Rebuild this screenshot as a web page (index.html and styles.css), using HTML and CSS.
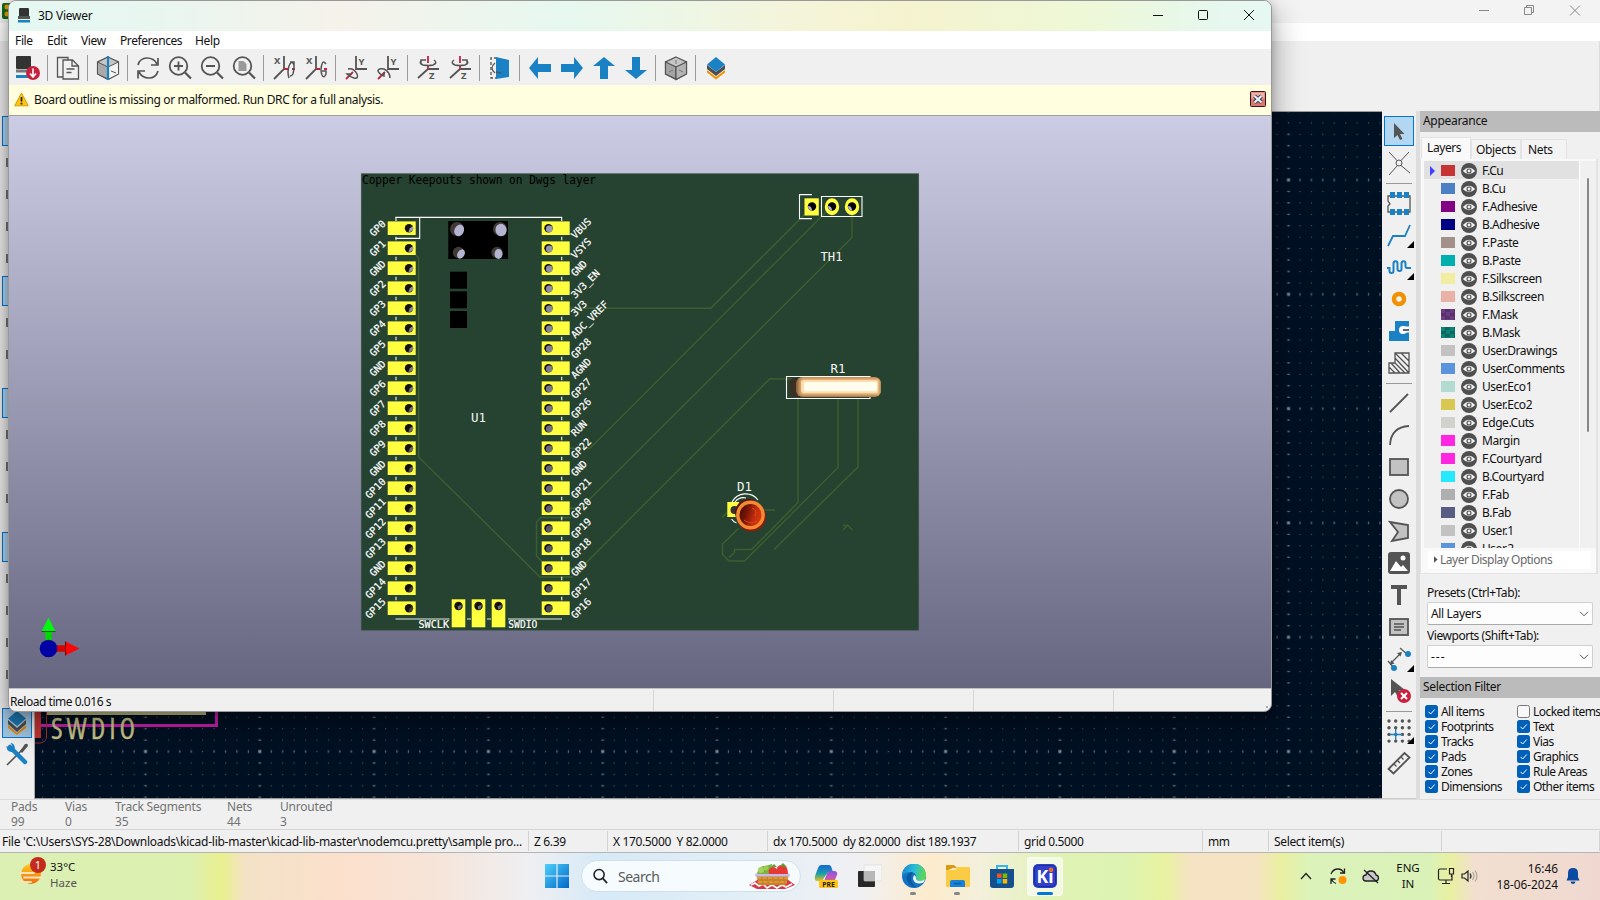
FILE: index.html
```html
<!DOCTYPE html>
<html lang="en">
<head>
<meta charset="utf-8">
<title>3D Viewer</title>
<link rel="stylesheet" href="styles.css">
</head>
<body>
<div class="desktop">
  <div class="editor">
    <div class="ed-title">
      <svg class="app-icon" viewBox="0 0 16 16"><rect width="16" height="16" rx="2" fill="#0d6b1c"/><circle cx="5" cy="4" r="2.5" fill="#f09a00"/><circle cx="5" cy="11" r="2.5" fill="#f09a00"/></svg>
      <svg class="ed-ctl" viewBox="0 0 130 23" fill="none" stroke="#8a8a8a"><path d="M9 10.5h10M54.500 7.500h7v7h-7zM56.500 7V5.500h7v7H62M100 5.500l10 10m0-10l-10 10"/></svg>
    </div>
    <div class="ed-menu"></div>
    <div class="ed-tools"></div>
    <div class="ed-body">
      <div class="ed-left">
        <i class="sel"></i><i></i><i></i><i></i><i></i><i class="sel"></i><i></i><i></i><b></b><i class="sel"></i><i></i><i></i><i></i><b></b><i class="sel"></i><i></i><i></i><i></i><i></i><b></b>
        <span class="tb on"><svg viewBox="0 0 32 32"><path d="M7 19l9 8 9-8v3l-9 7-9-7z" fill="#e08a10"/><path d="M7 14l9 8 9-8v4l-9 8-9-8z" fill="#4d4d4d"/><path d="M16 5l9 7.500-9 7.500-9-7.500z" fill="#1a74ac"/></svg></span>
        <span class="tb"><svg viewBox="0 0 32 32"><path d="M6 27L24 9" stroke="#545454" stroke-width="1.600"/><path d="M19 13l5-7q3-1 3 2l-6 7z" fill="#545454"/><path d="M9 9l15 15" stroke="#1a81c4" stroke-width="4.500" stroke-linecap="round"/><path d="M5.500 8q0 6 6 6 3-3 2-6-1-3-4-3l2 3-2 2z" fill="#1a81c4"/></svg></span>
      </div>
      <svg class="ed-canvas" viewBox="35 111 1347 688">
        <defs><pattern id="minor" x="145" y="751" width="11.430" height="11.430" patternUnits="userSpaceOnUse"><rect width="1.100" height="1.100" fill="#4f5967"/></pattern>
        <pattern id="major" x="88" y="694" width="114.300" height="114.300" patternUnits="userSpaceOnUse"><g id="ticks"></g></pattern></defs>
        <rect x="35" y="111" width="1347" height="688" fill="#001023"/>
        <rect x="35" y="111" width="1347" height="688" fill="url(#minor)"/>
        <rect x="35" y="111" width="1347" height="688" fill="url(#major)"/>
        <path d="M35 111.500h1347M35 798.500h1347" stroke="#9a9a9a"/>
        <rect x="47" y="700" width="159" height="15" fill="#c8c38a"/>
        <path d="M41 725.500h175.500V700" fill="none" stroke="#cc1fb0" stroke-width="3"/>
        <rect x="35" y="700" width="6" height="38" fill="#c83232"/>
        <path d="M46.500 700v37q-1 6-7 6h-5" fill="none" stroke="#a52d32"/>
        <text x="51" y="739" class="silk-big" textLength="84" lengthAdjust="spacing">SWDIO</text>
      </svg>
      <div class="ed-right" id="rightbar"></div>
      <div class="panel">
        <div class="cap">Appearance</div>
        <div class="tabs"><span class="tab act">Layers</span><span class="tab t2">Objects</span><span class="tab t3">Nets</span></div>
        <div class="page">
          <div class="listwrap"><div class="list" id="layers"></div><div class="scroll"><i></i></div></div>
          <div class="ldo"><svg viewBox="0 0 5 8"><path d="M0 0l4.500 4L0 8z" fill="#555"/></svg>Layer Display Options</div>
        </div>
        <div class="lab">Presets (Ctrl+Tab):</div>
        <div class="drop">All Layers<svg viewBox="0 0 10 6"><path d="M1 .8l4 4 4-4" fill="none" stroke="#555"/></svg></div>
        <div class="lab l2">Viewports (Shift+Tab):</div>
        <div class="drop"><span class="dash">---</span><svg viewBox="0 0 10 6"><path d="M1 .8l4 4 4-4" fill="none" stroke="#555"/></svg></div>
        <div class="cap c2">Selection Filter</div>
        <div class="checks" id="checks"></div>
      </div>
    </div>
    <div class="ed-info">
      <span class="w1">Pads<br>99</span><span class="w2">Vias<br>0</span><span class="w3">Track Segments<br>35</span><span class="w4">Nets<br>44</span><span>Unrouted<br>3</span>
    </div>
    <div class="ed-status">
      <span class="s1">File 'C:\Users\SYS-28\Downloads\kicad-lib-master\kicad-lib-master\nodemcu.pretty\sample pro...</span><span class="s2">Z 6.39</span><span class="s3">X 170.5000&nbsp; Y 82.0000</span><span class="s4">dx 170.5000&nbsp; dy 82.0000&nbsp; dist 189.1937</span><span class="s5">grid 0.5000</span><span class="s6">mm</span><span class="s7">Select item(s)</span><span class="s8"></span>
    </div>
  </div>

  <div class="viewer">
    <div class="v-title">
      <svg class="v-icon" viewBox="0 0 12 15"><rect x="1" width="10" height="9" rx="1" fill="#333"/><rect y="8" width="12" height="3" fill="#555"/><rect y="12" width="12" height="2.500" fill="#1a81c4"/></svg>
      <span>3D Viewer</span>
      <svg class="v-ctl" viewBox="0 0 120 30" fill="none" stroke="#111"><path d="M1 14.500h10"/><rect x="46.500" y="9.500" width="9" height="9" rx="1"/><path d="M92 9l10 10m0-10L92 19"/></svg>
    </div>
    <div class="v-menu"><span class="m1">File</span><span class="m2">Edit</span><span class="m3">View</span><span class="m4">Preferences</span><span>Help</span></div>
    <div class="v-tools" id="vtools"></div>
    <div class="v-warn">
      <svg class="wi" viewBox="0 0 15 15"><path d="M7.500 1l6.800 12.800H.7z" fill="#fcc419" stroke="#d79a00" stroke-linejoin="round"/><path d="M7.500 5v4.500M7.500 10.800v1.700" stroke="#222" stroke-width="1.700"/></svg>
      <span>Board outline is missing or malformed. Run DRC for a full analysis.</span>
      <svg class="wx" viewBox="0 0 16 16"><rect x=".5" y=".5" width="15" height="15" rx="1" fill="#d9796c" stroke="#3c1020"/><path d="M1.500 1.500h13v6h-13z" fill="#edb0a4"/><path d="M4.500 5l7 6.500m0-6.500l-7 6.500" stroke="#333a50" stroke-width="4"/><path d="M4.500 5l7 6.500m0-6.500l-7 6.500" stroke="#eef" stroke-width="2.200"/></svg>
    </div>
    <svg class="v-canvas" viewBox="9 116 1262 572">
      <defs>
        <linearGradient id="sky" x1="0" y1="0" x2="0" y2="1"><stop offset="0" stop-color="#cccce5"/><stop offset="1" stop-color="#666680"/></linearGradient>
        <linearGradient id="res" x1="0" y1="0" x2="0" y2="1"><stop offset="0" stop-color="#c08850"/><stop offset=".2" stop-color="#f6c48c"/><stop offset=".8" stop-color="#f6c48c"/><stop offset="1" stop-color="#a87444"/></linearGradient>
        <linearGradient id="resend" x1="0" y1="0" x2="1" y2="0"><stop offset="0" stop-color="#7a5026" stop-opacity=".9"/><stop offset=".09" stop-color="#c08850" stop-opacity="0"/><stop offset=".96" stop-color="#c08850" stop-opacity="0"/><stop offset="1" stop-color="#a87444" stop-opacity=".7"/></linearGradient>
        <linearGradient id="led" x1="0" y1="0" x2="1" y2=".3"><stop offset="0" stop-color="#2c0804"/><stop offset=".45" stop-color="#7c1606"/><stop offset=".75" stop-color="#c02c0c"/><stop offset="1" stop-color="#d8380e"/></linearGradient>
        <linearGradient id="shade" x1="0" y1="0" x2="0" y2="1"><stop offset="0" stop-color="#b4b4cc"/><stop offset="1" stop-color="#8a8aa2"/></linearGradient>
      </defs>
      <rect x="9" y="116" width="1262" height="572" fill="url(#sky)"/>
      <rect x="361.300" y="173.800" width="557.400" height="456.300" fill="#264230" stroke="#3c5146" stroke-width=".7"/>
      <g class="track">
        <path d="M415 254l3.700 4V457L540 577h33M571 517.500h-30l-4.500 4.500v34l6 6"/>
        <path d="M570 308.300h140.700L811 208M570 448.300h20L831 207M570 508.300h10.500L852 237.500V210M570 568.300h10.500L769.500 379H795"/>
        <path d="M798 398V502.500L751.500 549.500H734.500v3L729 557.500M838 398v69.500L744.500 561H729l-6.500-6.500V544l16-15.500M858 398v69l-84 82.500"/>
        <path d="M722 517.500l6-6M764 510h11M843 525.500h5l4.500 4.500M843 530l5-5"/>
      </g>
      <text x="362" y="184" class="cu-note" textLength="234" lengthAdjust="spacingAndGlyphs">Copper Keepouts shown on Dwgs layer</text>
      <g class="silk">
        <path d="M395.500 217.400H562M419.700 217.400v21H395.500"/>
        <path d="M396 217v4M561.700 217v4"/>
        <path d="M395.500 619h54M467 619h4M487 619h4M508 619h54" stroke="#a8b5ac" stroke-width="1.700"/>
        <path d="M812 194.600h-12.500v24H812M821.500 196.500H862v20h-40.500zM786.500 376.500H870v22h-83.500z"/>
      </g>
      <g id="pads"></g>
      <rect x="448.300" y="221" width="59.700" height="38"/>
      <rect x="450" y="271.700" width="17" height="17"/><rect x="450" y="291.300" width="17" height="17"/><rect x="450" y="311" width="17" height="17"/>
      <g fill="#403a36"><circle cx="457" cy="229" r="7"/><circle cx="500" cy="229" r="7"/><circle cx="458.500" cy="252.500" r="5.700"/><circle cx="497" cy="252.500" r="5.700"/></g>
      <g fill="#b4b4d0"><ellipse cx="459.300" cy="230.300" rx="4.700" ry="6" transform="rotate(25 459 230)"/><ellipse cx="501" cy="230" rx="5.600" ry="6.200" transform="rotate(-10 501 230)"/><ellipse cx="461" cy="254" rx="3.500" ry="5" transform="rotate(30 461 254)"/><ellipse cx="498.500" cy="254" rx="4" ry="5"/></g>
      <g class="ref"><text x="471" y="422" textLength="15" lengthAdjust="spacingAndGlyphs">U1</text><text x="820.500" y="261" textLength="22" lengthAdjust="spacingAndGlyphs">TH1</text><text x="830.500" y="373" textLength="15" lengthAdjust="spacingAndGlyphs">R1</text><text x="737" y="491" textLength="15" lengthAdjust="spacingAndGlyphs">D1</text></g>
      <g class="lbl"><text x="418.500" y="628" textLength="30.500" lengthAdjust="spacingAndGlyphs">SWCLK</text><text x="508.300" y="628" textLength="29" lengthAdjust="spacingAndGlyphs">SWDIO</text></g>
      <rect x="804.500" y="198.300" width="14.300" height="17.200" fill="#ffff40"/>
      <ellipse cx="832" cy="206.800" rx="7.200" ry="8.500" fill="#ffff40"/><ellipse cx="852" cy="206.800" rx="7.200" ry="8.500" fill="#ffff40"/>
      <circle cx="812" cy="206.500" r="4.200"/><circle cx="832" cy="206.500" r="4.200"/><circle cx="852" cy="206.500" r="4.200"/>
      <g fill="#b4b4cc"><path d="M808 206q4 0 4 4.700-4-.5-4-4.700zM828 206q4 0 4 4.700-4-.5-4-4.700zM848 206q4 0 4 4.700-4-.5-4-4.700z"/></g>
      <rect x="789.500" y="378" width="30" height="19" rx="5" fill="#3a3024"/>
      <rect x="796.500" y="377" width="84.300" height="20" rx="6" fill="url(#res)"/>
      <rect x="796.500" y="377" width="84.300" height="20" rx="6" fill="url(#resend)"/>
      <rect x="801" y="380" width="77" height="13" rx="3" fill="#ffdcae"/><rect x="804" y="382" width="73" height="9.300" rx="1.500" fill="#fffeec"/>
      <path d="M732 502a15.500 15.500 0 0 1 26-2M735 502a11 11 0 0 1 11-4M731.500 519q2 3 5 4" class="silkarc"/>
      <rect x="727.300" y="502" width="12" height="15" fill="#ffff40"/><circle cx="734.500" cy="510" r="4" fill="#333"/>
      <circle cx="751.500" cy="517" r="14.500" fill="#8c1c08"/><circle cx="748.500" cy="512.500" r="13.500" fill="#5c1408"/>
      <circle cx="750.500" cy="515" r="12.700" fill="url(#led)" stroke="#f58a34" stroke-width="3.400"/>
      <path d="M752 508q6 2 3 8M744 520q6 5 13 1" fill="none" stroke="#d84a1c" stroke-width="1"/>
      <g><rect x="45.300" y="630" width="6.400" height="13" fill="#00d800"/><path d="M48.500 617.500l7 14h-14z" fill="#00f810"/><path d="M41.500 631.500h14" stroke="#006000"/>
      <rect x="55" y="645.300" width="12" height="6.400" fill="#d80000"/><path d="M79.500 648.500l-14 7v-14z" fill="#fa0808"/><path d="M65.500 641.500v14" stroke="#700000"/><circle cx="48.500" cy="648.500" r="8.800" fill="#0000a4"/></g>
    </svg>
    <div class="v-status"><span class="f1">Reload time 0.016 s</span><span class="f2"></span><span class="f3"></span><span class="f4"></span><span class="f5"></span></div>
  </div>

  <div class="taskbar">
    <div class="weather">
      <svg viewBox="0 0 30 32"><defs><linearGradient id="sun" x1="0" y1="0" x2="0" y2="1"><stop offset="0" stop-color="#ffc81e"/><stop offset="1" stop-color="#ee6c10"/></linearGradient></defs><circle cx="13" cy="17" r="10" fill="url(#sun)"/><path d="M2 16h14M6 20.500h18M2 25h11" stroke="#fde3b8" stroke-width="1.800" stroke-linecap="round"/><circle cx="20" cy="8" r="8" fill="#c42b1c"/><text x="20" y="12" text-anchor="middle" font-size="11" fill="#fff">1</text></svg>
      <div>33°C<br><em>Haze</em></div>
    </div>
    <div class="apps">
      <svg class="start" viewBox="0 0 24 24"><defs><linearGradient id="win" x1="0" y1="0" x2="1" y2="1"><stop offset="0" stop-color="#4fd0fb"/><stop offset="1" stop-color="#0067c8"/></linearGradient></defs><path d="M0 0h11.400v11.400H0zM12.600 0H24v11.400H12.600zM0 12.600h11.400V24H0zM12.600 12.600H24V24H12.600z" fill="url(#win)"/></svg>
      <div class="search"><svg viewBox="0 0 16 16"><circle cx="6.500" cy="6.500" r="5.400" fill="none" stroke="#222" stroke-width="1.700"/><path d="M10.500 10.500l4.500 5" stroke="#222" stroke-width="1.900"/></svg><span>Search</span>
        <svg class="cake" viewBox="0 0 46 26"><path d="M0 22L10 16h28l8 6-10 4H8z" fill="#d63a48"/><path d="M2 22l4-2 4 3 4-2 4 4 5-3 5 3 5-3 4 2 6-3" stroke="#fff" stroke-width="1.600" fill="none"/><path d="M7 12h33l-3 10H10z" fill="#c98324"/><path d="M8 15h31M9 19h29" stroke="#e0a244" stroke-width="1.500" stroke-dasharray="4 1.500"/><rect x="6" y="10.500" width="35" height="3" rx="1.500" fill="#c9b8ea"/><path d="M8 11q2-9 8-8l7-2 1 10z" fill="#7cb342"/><circle cx="12" cy="7" r="3" fill="#a5d35c"/><circle cx="17" cy="5" r="2.500" fill="#9ccc50"/><path d="M20 11q-2-6 4-7 5 0 4 7zM28 11q-2-9 5-9 6 0 6 9z" fill="#e53935"/><path d="M22 4l3-3 3 3zM31 3l3-3 4 4z" fill="#5a9e30"/></svg></div>
      <svg class="a copilot" viewBox="0 0 24 24"><defs><linearGradient id="cpa" x1="0" y1="0" x2="0" y2="1"><stop offset="0" stop-color="#1668d8"/><stop offset=".55" stop-color="#1aa0a8"/><stop offset="1" stop-color="#e8c020"/></linearGradient><linearGradient id="cpb" x1="0" y1="0" x2="0" y2="1"><stop offset="0" stop-color="#8a50e8"/><stop offset="1" stop-color="#f2667a"/></linearGradient></defs><path d="M7 1h8q2 0 3 4l1 3h-5L8 17H3q-3 0-2-5l3-8q1-3 3-3z" fill="url(#cpa)"/><path d="M14 7h6q4 0 3 4l-3 7q-1 2-3 2H9z" fill="url(#cpb)"/><rect x="5" y="16" width="19" height="8" rx="1.500" fill="#ffc414"/><text x="14.500" y="22.600" text-anchor="middle" font-size="6.800" font-weight="bold" fill="#222">PRE</text></svg>
      <svg class="a" viewBox="0 0 24 24"><rect x="0" y="7" width="17" height="16" rx="1" fill="#282828"/><rect x="6" y="1" width="18" height="16" rx="1" fill="#f6f6f6" stroke="#d8d8d8" stroke-width=".6"/><rect x="6" y="7" width="11" height="10" fill="#b8b8b8"/></svg>
      <svg class="a" viewBox="0 0 24 24"><defs><linearGradient id="edg" x1="0" y1=".2" x2="1" y2=".4"><stop offset="0" stop-color="#1b80d0"/><stop offset=".5" stop-color="#28bcd8"/><stop offset="1" stop-color="#62d850"/></linearGradient></defs><circle cx="12" cy="12" r="12" fill="#1272c4"/><path d="M0 12A12 12 0 0 1 24 11q0 6-6 6-4 0-4-3 1-5-5-6Q3 8 0 12z" fill="url(#edg)"/><path d="M12.500 11q-2 2-1.500 4 1.500 5 7 4.500 2.500-.5 4-1.500l1-3q-2 2-5 2-4 0-4-3 0-2-1.500-3z" fill="#e8f4fa"/><path d="M9 8Q2 12 6 18q3 5 9 5.500Q9 20 9 14q0-3 2-5z" fill="#0c59a4"/></svg>
      <svg class="a" viewBox="0 0 24 24"><path d="M0 2q0-1 1-1h7l3 3h-4L0 7z" fill="#d89a10"/><path d="M0 6h9l2-3h12q1 0 1 1v18q0 1-1 1H1q-1 0-1-1z" fill="#fbcb44"/><path d="M4 23v-5q0-2 2-2h11q2 0 2 2v5z" fill="#1683d8"/><path d="M8 19.500h7" stroke="#0a5aa8" stroke-width="1.400"/></svg>
      <svg class="a store" viewBox="0 0 24 24"><path d="M7 6V2h10v4" fill="none" stroke="#35b6ee" stroke-width="2"/><path d="M0 5h24v16q0 3-3 3H3q-3 0-3-3z" fill="#15508c"/><path d="M7 9.500h4.500V14H7z" fill="#f25022"/><path d="M12.700 9.500h4.500V14h-4.500z" fill="#7fba00"/><path d="M7 15h4.500v4.500H7z" fill="#00a4ef"/><path d="M12.700 15h4.500v4.500h-4.500z" fill="#ffb900"/></svg>
      <div class="tile"><svg viewBox="0 0 24 24"><rect width="24" height="24" rx="5" fill="#2e41c8"/><rect x="1.500" y="1.500" width="21" height="21" rx="4" fill="none" stroke="#1c2ca0"/><text x="3.500" y="18.500" font-size="17" font-weight="bold" fill="#fff" textLength="17" lengthAdjust="spacingAndGlyphs">Ki</text><circle cx="18" cy="5.800" r="2.200" fill="#f26a1c"/></svg></div>
      <i class="run r1"></i><i class="run r2"></i><i class="run r3"></i>
    </div>
    <div class="tray">
      <svg class="ty" viewBox="0 0 82 24" fill="none" stroke="#222" stroke-width="1.300"><path d="M1 15l5-5.500L11 15"/><path d="M31 10q2-5 7-5 4 0 6 4m.5-4.500V9H40M36 19.500q-3-1-4.500-4M31 20v-5h4.500"/><circle cx="42.500" cy="16" r="4" fill="#ff9500" stroke="none"/><path d="M66 17q-3 0-3-3 0-3 3-3 1-4 5-4 4 0 5 4 2.500.5 2.500 3T76 17z" fill="#c8c8c8"/><path d="M64 6l14 13" /></svg>
      <div class="lang">ENG<br>IN</div>
      <svg class="net" viewBox="0 0 42 20" fill="none" stroke="#222" stroke-width="1.200"><path d="M10 3H3q-1.500 0-1.500 1.500v8Q1.500 14 3 14h12V9M5 17.500h8M9 14v3M12.500 2.500h4V8h-4zM14.500 8v3"/><path d="M25 8h2.500L31 5v10l-3.500-3H25z"/><path d="M33 7.500q2 2.500 0 5"/><path d="M35.500 6q3 4 0 8M38 4.500q4 5.500 0 11" stroke="#a9a79a"/></svg>
      <div class="clock">16:46<br>18-06-2024</div>
      <svg class="bell" viewBox="0 0 14 16"><path d="M7 0q5 0 5 5v4l1.500 3.500H.5L2 9V5q0-5 5-5zM4.500 13.500h5Q9 16 7 16t-2.500-2.500z" fill="#0b4aa2"/></svg>
    </div>
  </div>
</div>
<script src="app.js"></script>
</body>
</html>
```

FILE: styles.css
```css
* { box-sizing: border-box; }
body { margin: 0; font: 12px/15px "Noto Sans", "Open Sans", sans-serif; letter-spacing: -0.35px; color: #111; overflow: hidden; }
svg { display: block; flex: none; }
.desktop { position: relative; width: 1600px; height: 900px; display: flex; flex-direction: column; overflow: hidden; background: #f0f0f0; }
.editor { height: 853px; display: flex; flex-direction: column; flex: none; }
.ed-title { height: 23px; background: #f3f3f3; display: flex; justify-content: space-between; }
.app-icon { width: 16px; height: 16px; margin: 3px 0 0 2px; }
.ed-ctl { width: 130px; height: 23px; }
.ed-menu { height: 18px; background: #fff; }
.ed-tools { height: 70px; background: #f0f0f0; border-right: 1px solid #ddd; }
.ed-body { height: 688px; display: flex; flex: none; }
.ed-left { width: 35px; padding: 4px 0 0 1px; background: #f0f0f0; border-right: 1px solid #aaa; display: flex; flex-direction: column; }
.ed-left i { height: 30px; margin: 1px; width: 30px; flex: none; background: linear-gradient(#777, #777) 4px 10px / 2px 9px no-repeat; }
.ed-left i.sel { background: #b3d7f3; border: 1px solid #0078d7; }
.ed-left b { height: 16px; flex: none; }
.tb { display: block; width: 32px; height: 32px; flex: none; }
.tb svg { width: 32px; height: 32px; }
.tb.on { background: #b3d6f3; border: 1px solid #0078d7; width: 30px; height: 30px; margin: 1px; }
.tb.on svg { margin: -2px; }
.ed-left .tb.on { background: #a4c6e0; }
.ed-left .tb.on svg { margin-top: -3px; }
.ed-left .tb + .tb svg { margin-top: -1px; }
.ed-canvas { width: 1347px; height: 688px; }
.silk-big { font: 28.500px "Open Sans", sans-serif; font-stretch: 75%; fill: #cfca8c; stroke: #cfca8c; stroke-width: .3; letter-spacing: 0; }
.ed-right { width: 34px; padding: 4px 1px 0; display: flex; flex-direction: column; border-bottom: 1px solid #ccc; }
.sep-h { height: 8px; flex: none; display: flex; align-items: center; padding: 0 3px; }
.sep-h::before { content: ""; height: 1px; width: 26px; background: #999; }
.panel { width: 184px; border-left: 4px solid #ddd; display: flex; flex-direction: column; }
.cap { height: 21px; background: #bbb; padding: 2px 3px; letter-spacing: -0.3px; flex: none; }
.tabs { height: 27px; display: flex; align-items: flex-end; padding: 5px 0 0 1px; flex: none; }
.tab { height: 20px; border: 1px solid #e3e3e3; border-bottom: 0; background: #f3f3f3; padding: 2px 4px; }
.tab.act { width: 50px; height: 22px; background: #f9f9f9; padding: 2px 5px; letter-spacing: -0.4px; }
.t2 { width: 50px; } .t3 { width: 46px; padding-left: 6px; }
.page { height: 415px; flex: none; background: #f9f9f9; border: 1px solid #e3e3e3; border-width: 0 2px 1px 1px; width: 178px; padding: 2px 0 0 3px; }
.listwrap { height: 387px; display: flex; background: #f0f0f0; overflow: hidden; }
.list { width: 156px; border-right: 1px solid #fff; letter-spacing: -0.45px; }
.row { height: 18px; display: flex; align-items: center; padding: 1px 0 0 6px; }
.row.cur { background: #e1e1e1; }
.row .mark { width: 11px; height: 10px; }
.row .sw { width: 14px; height: 11px; margin: 0 6px 1px 0; }
.row .eye { width: 16px; height: 16px; margin-right: 5px; }
.sw.chk { background-image: conic-gradient(#0003 25%, transparent 0 50%, #0003 0 75%, transparent 0); background-size: 9px 7px; }
.scroll { width: 16px; padding: 17px 0 0 7px; }
.scroll i { display: block; width: 2px; height: 254px; background: #888; border-radius: 1px; }
.ldo { margin: 3px 0 0 4px; width: 163px; height: 18px; background: #fff; color: #6a6a6a; display: flex; align-items: center; gap: 3px; padding: 0 0 1px 6px; letter-spacing: -0.5px; }
.ldo svg { width: 4px; height: 7px; margin-right: -1px; }
.lab { height: 28px; padding: 11px 0 0 7px; flex: none; letter-spacing: -0.45px; }
.lab.l2 { height: 20px; padding-top: 3px; }
.drop { margin-left: 7px; width: 166px; height: 23px; flex: none; border: 1px solid #d0d0d0; border-bottom-color: #aaa; background: #fdfdfd; border-radius: 2px; display: flex; align-items: center; justify-content: space-between; padding: 0 3px; }
.drop svg { width: 10px; height: 6px; }
.dash { letter-spacing: 1px; }
.cap.c2 { margin-top: 9px; }
.checks { display: grid; grid-template-columns: 92px 88px; grid-auto-rows: 15px; padding: 6px 0 0 5px; white-space: nowrap; margin-right: -5px; letter-spacing: -0.55px; }
.ck { display: flex; align-items: center; gap: 3px; }
.ck svg { width: 13px; height: 13px; }
.ed-info { height: 30px; flex: none; border-top: 1px solid #ddd; color: #737373; display: flex; padding: 0 0 0 11px; letter-spacing: -0.2px; line-height: 14.5px; }
.w1 { width: 54px; } .w2 { width: 50px; } .w3 { width: 112px; } .w4 { width: 53px; }
.ed-status { height: 24px; flex: none; border-top: 1px solid #d5d5d5; border-bottom: 1px solid #b5b5b5; display: flex; padding-top: 1px; letter-spacing: -0.35px; }
.ed-status span { border-right: 1px solid #d2d2d2; height: 20px; line-height: 22px; padding-left: 5px; white-space: nowrap; overflow: hidden; }
.ed-status .s1 { width: 529px; padding-left: 2px; letter-spacing: -0.25px; } .s2 { width: 79px; } .s3 { width: 160px; } .s4 { width: 251px; } .s5 { width: 184px; } .s6 { width: 66px; } .s7 { width: 173px; } .s8 { flex: 1; }

.viewer { position: absolute; left: 8px; top: 0; width: 1264px; height: 712px; border: 1px solid #999; border-radius: 8px; overflow: hidden; background: #f0f0f0; display: flex; flex-direction: column; box-shadow: 0 12px 32px rgba(0,0,0,.38), 0 2px 10px rgba(0,0,0,.2); }
.v-title { height: 30px; flex: none; display: flex; align-items: center; background: linear-gradient(90deg, #e5f8f2 0, #e8f6f0 140px, #f5f2ea 330px, #e6f8f0 560px, #f4f4da 780px, #f5f3cf 900px, #edf8d8 1090px, #e6f8ee 1200px, #e6f8f2 1262px); }
.v-title span { padding-bottom: 2px; letter-spacing: -0.25px; }
.v-icon { width: 12px; height: 15px; margin: 0 8px 2px 9px; }
.v-ctl { width: 120px; height: 30px; margin-left: auto; margin-right: -1px; }
.v-menu { height: 18px; flex: none; background: #fff; display: flex; padding: 2px 0 0 6px; }
.m1 { width: 32px; } .m2 { width: 34px; } .m3 { width: 39px; } .m4 { width: 75px; letter-spacing: -0.42px; }
.v-tools { height: 36px; flex: none; display: flex; align-items: center; padding: 2px 0 0 3px; }
.sep-v { width: 8px; height: 26px; border-left: 1px solid #9a9a9a; margin-left: 3px; margin-right: -3px; flex: none; }
.v-warn { height: 31px; flex: none; background: #ffffe0; border-bottom: 1px solid #a0a0a0; display: flex; align-items: center; padding: 0 5px 1px; letter-spacing: -0.36px; }
.wi { width: 15px; height: 15px; margin-right: 5px; }
.wx { width: 16px; height: 16px; margin: 0 0 1px auto; }
.v-canvas { width: 1262px; height: 572px; }
.track { fill: none; stroke: #3c5f30; stroke-width: 1.4; }
.silk { fill: none; stroke: #fff; stroke-width: 1.1; }
.silkarc { fill: none; stroke: #fff; stroke-width: 1.2; }
.cu-note { font: 11.500px "DejaVu Sans Mono", monospace; fill: #000; letter-spacing: 0; }
.ref text { font: 12.500px "DejaVu Sans Mono", monospace; fill: #f4f8f5; letter-spacing: 0; }
.lbl text { font: 10px "DejaVu Sans Mono", monospace; fill: #fff; stroke: #fff; stroke-width: .2; letter-spacing: 0; }
.v-status { height: 23px; flex: none; border-top: 1px solid #c0c0c0; display: flex; padding-top: 1px; letter-spacing: -0.4px; }
.v-status span { border-right: 1px solid #d5d5d5; height: 21px; line-height: 23px; padding-left: 1px; }
.v-status .f1 { letter-spacing: -0.47px; }
.f1 { width: 645px; } .f2 { width: 180px; } .f3, .f4 { width: 140px; } .v-status .f5 { flex: 1; border: 0; background: radial-gradient(circle, #aaa 1px, transparent 1.500px) right 2px bottom 2px / 4px 4px no-repeat; }

.taskbar { height: 47px; display: flex; position: relative; background: linear-gradient(90deg, #dcf0b4 0, #dcf0b0 190px, #eaf08e 222px, #f3e2c6 245px, #fce0cc 340px, #f6e4d8 430px, #efeff2 530px, #d6eaf7 600px, #e4eff6 760px, #f0f0f3 860px, #fdebcc 930px, #f3f0dc 980px, #e0f3b4 1060px, #dcf3b4 1120px, #e8f2a0 1165px, #f5e3c4 1190px, #f5e3c4 1255px, #eaefa0 1280px, #dbf3ba 1310px, #daf2b8 1430px, #e9f0a0 1450px, #f2dfd0 1475px, #f0d8d0 1600px); letter-spacing: 0; }
.weather { display: flex; width: 544px; padding: 4px 0 0 18px; font-size: 11.500px; line-height: 16px; }
.weather svg { width: 30px; height: 32px; margin-right: 2px; }
.weather div { padding-top: 2px; }
.weather em { font-style: normal; color: #555; }
.apps { display: flex; align-items: center; position: relative; width: 519px; padding: 0 0 1px 1px; }
.start { width: 24px; height: 24px; }
.search { margin-left: 12px; width: 220px; height: 32px; border-radius: 16px; background: #f6fbfe; border: 1px solid #d3dfe8; display: flex; align-items: center; padding: 0 5px 0 11px; color: #5a5a5a; font-size: 14px; letter-spacing: -0.5px; flex: none; }
.search svg { width: 15px; height: 16px; margin-right: 10px; }
.search .cake { width: 46px; height: 26px; margin: 0 0 0 auto; }
.a { width: 24px; height: 24px; margin-left: 20px; }
.a.copilot { margin-left: 13px; }
.tile { margin-left: 13px; width: 36px; height: 39px; flex: none; border-radius: 4px; background: #fff9; border: 1px solid #fff8; display: flex; align-items: center; justify-content: center; }
.tile svg { width: 24px; height: 24px; }
.run { position: absolute; bottom: 5px; width: 6px; height: 3px; border-radius: 2px; background: #868686; }
.r1 { left: 366px; } .r2 { left: 410px; } .r3 { left: 493px; width: 16px; background: #0078d4; }
.tray { margin-left: auto; display: flex; align-items: center; width: 300px; padding-bottom: 1px; }
.ty { width: 82px; height: 24px; }
.lang { width: 52px; text-align: center; line-height: 16px; font-size: 11.500px; }
.net { width: 42px; height: 20px; margin-left: 3px; }
.clock { width: 79px; text-align: right; line-height: 16px; font-size: 11.800px; }
.bell { width: 14px; height: 16px; margin-left: 8px; }
```

FILE: app.js
```js
const G = '#545454', B = '#1a81c4';
const btn = (d, on) => `<span class="tb${on ? ' on' : ''}"><svg viewBox="0 0 32 32" fill="none" stroke="${G}" stroke-width="1.8">${d}</svg></span>`;
const corner = `<path d="M31 22v7h-7z" fill="#000" stroke="none"/>`;

/* drawing tools */
let dots = '';
for (let r = 0; r < 4; r++) for (let c = 0; c < 4; c++) dots += `<circle cx="${6 + c * 6.7}" cy="${6 + r * 6.7}" r="1.7" fill="${G}" stroke="none"/>`;
const right = [
  btn(`<path d="M11 8v15l3.500-3 2.500 5 2.500-1-2.500-5h4.500z" fill="${G}" stroke="none"/>`, true),
  btn(`<path d="M6 5l8 8.500M26 5l-8 8.500M6 28l8-9M27 26l-9-7.500" stroke-width="1"/><circle cx="16" cy="16" r="3" stroke-width="1"/>`), '-',
  btn(`<path d="M5 9h22v16H5v-6l2-2-2-3z" stroke-width="1.3"/><path d="M7 5h5v6H7zM14 5h5v6h-5zM21 5h5v6h-5zM7 22h5v6H7zM14 22h5v6h-5zM21 22h5v6h-5z" fill="${B}" stroke="none"/>`),
  btn(`<path d="M5 27l5-10h12l5-11" stroke="${B}"/>${corner}`),
  btn(`<path d="M4 17h2.500v3q0 2 2 2t2-2v-7.500q0-2.200 2-2.200t2 2.200V18q0 2 2 2t2-2v-5.500q0-2.200 2-2.200t2 2.200V15q0 2 1.500 2H28" stroke="${B}" stroke-width="2"/>${corner}`),
  btn(`<circle cx="16" cy="16" r="5" stroke="#f29100" stroke-width="4.500"/>`),
  btn(`<path d="M12 6h14v20H6V16h6z" fill="${B}" stroke="none"/><path d="M26 14.500h-6" stroke="#fff" stroke-width="6"/><circle cx="20" cy="15" r="4" fill="#fff" stroke="none"/><path d="M26 15h-6"/>`),
  btn(`<path d="M12 6h14v20H6V16h6zM12 6l14 14M12 11l14 15M12 16l10 10M8 16l9 10M18 6l8 8M6 20l6 6" stroke-width="1.3"/>`), '-',
  btn(`<path d="M7 25L25 7"/>`),
  btn(`<path d="M7 26Q8 8 26 7"/>`),
  btn(`<rect x="7" y="8" width="18" height="16" fill="#c2c2c2"/>`),
  btn(`<circle cx="16" cy="16" r="9" fill="#c2c2c2"/>`),
  btn(`<path d="M7 7l18 3v13L9 26l6-9z" fill="#c2c2c2"/>`),
  btn(`<rect x="5" y="5" width="22" height="22" rx="3" fill="${G}" stroke="none"/><path d="M7 24l6-10 5 6 2-2 5 6z" fill="#fff" stroke="none"/><circle cx="20" cy="11" r="2.500" fill="#fff" stroke="none"/>`),
  btn(`<path d="M8 8h16M16 8v18" stroke-width="4"/>`),
  btn(`<rect x="7" y="8" width="18" height="16" fill="#c2c2c2"/><path d="M11 13h10M11 16h10M11 19h7" stroke-width="1.400"/>`),
  btn(`<path d="M8 20L18 10M5 18l6 7M17 5l8 7" stroke-width="1.200"/><path d="M7 22l1-5 3.500 3.500zM19 9l-5 1 3.500 3.500z" fill="${G}" stroke="none"/><circle cx="25" cy="11" r="3" fill="${B}" stroke="none"/><circle cx="11" cy="25" r="3" fill="${B}" stroke="none"/>${corner}`),
  btn(`<path d="M8 4v17l4-4 3 5 4-3-3-4h6z" fill="${G}" stroke="none"/><circle cx="21" cy="21" r="7" fill="#c8213f" stroke="none"/><path d="M18 18l6 6m0-6l-6 6" stroke="#fff" stroke-width="2"/>`), '-',
  btn(`${dots}<path d="M7 19.500h12M12.700 14v11" stroke="${B}" stroke-width="1.300"/>${corner}`),
  btn(`<path d="M5.500 22L21.500 6l5 4.500-16 16z"/><path d="M11 17l2.500 2.500M14.500 13.500l2.500 2.500M18 10l2.500 2.500" stroke-width="1.300"/>`)
];
document.getElementById('rightbar').innerHTML = right.map(s => s === '-' ? '<div class="sep-h"></div>' : s).join('');

/* viewer toolbar */
const rot = (axis, flip) => {
  const red = 'stroke="#c8213f"';
  const t = (x, y) => `<text x="${x}" y="${y}" font-size="9.500" font-weight="bold" fill="${G}" stroke="none">${axis}</text>`;
  if (axis === 'X') return btn(`<path d="M16 4v13L6 27"/><path d="M16 17h4M24 17h3" ${red}/>${t(6, 12)}<path d="${flip ? 'M26 12q-3-4-4 0-2 6 0 11 2 4 4-1v-3h-4' : 'M21 26q-2-6 0-12 2-5 4-3 2 2 0 11-1 2-3 2M22 10h4v4'}" stroke-width="1.500"/>`);
  if (axis === 'Y') return btn(`<path d="M16 4v13h11"/><path d="M13 20L6 27" ${red}/>${t(18.5, 13)}<path d="${flip ? 'M18 26q0-6-6-9-6-1-6 2 1 3 6 5v-4' : 'M8 17q6-1 9 5 2 5-3 4-4-1-7-4h5'}" stroke-width="1.500"/>`);
  return btn(`<path d="M16 17h11M16 17L6 26"/><path d="M16 4v7M16 14v3" ${red}/>${t(17, 27)}<path d="${flip ? 'M22 8q4 3-1 5-6 1-10 0-5-2-1-5M23 12V8h-5' : 'M10 8q-4 3 1 5 6 1 10 0 5-2 1-5M9 12V8h5'}" stroke-width="1.500"/>`);
};
const lens = inner => btn(`<circle cx="14.500" cy="14" r="8.800"/><path d="M21 20.500l6 6" stroke-width="2.200"/>${inner}`);
const cubeTop = '<path d="M16 5l10.500 5v12L16 27.500 5.500 22V10z" fill="#c6c6c6" stroke-width="1.200"/>';
const arrow = a => btn(`<path transform="rotate(${a} 16 16)" d="M5 16l9-11v7h13v8H14v7z" fill="${B}" stroke="none"/>`);
const vt = [
  btn(`<rect x="4" y="4" width="15" height="13" rx="1" fill="#333" stroke="none"/><path d="M4 19h14" stroke="#777" stroke-width="3"/><path d="M4 24.500h12" stroke="${B}" stroke-width="3"/><circle cx="21" cy="21" r="7" fill="#c8213f" stroke="none"/><path d="M21 16.500v8m-3-3l3 3.500 3-3.500" stroke="#fff" stroke-width="1.600"/>`), '-',
  btn(`<path d="M11 25H5.500V5.500H16V8" stroke-width="1.300"/><path d="M11 8h9.500l6 6v13H11zM20 8v6h6.500M14.500 17h8M14.500 20.500h5" stroke-width="1.300"/>`), '-',
  btn(`${cubeTop}<path d="M5.500 10L16 15v12L5.500 22z" fill="#aaa" stroke-width="1"/><path d="M16 15l10.500-5v12L16 27.500z" fill="#f3f3f3" stroke-width="1"/><path d="M19 19l5 2" stroke-width="1"/><path d="M16 4v24" stroke="${B}" stroke-width="2.200"/>`), '-',
  btn(`<path d="M6 13q2-7 9-7 7 0 10 6M26 6v7h-7M26 19q-2 7-9 7-7 0-10-6M6 26.500V19h7" stroke-width="1.700"/>`),
  lens('<path d="M10 14h9M14.500 9.500v9"/>'), lens('<path d="M10 14h9"/>'), lens('<path d="M10.500 9h5l3 3v7h-8z" fill="#999" stroke="none"/>'), '-',
  rot('X', 0), rot('X', 1), '-', rot('Y', 0), rot('Y', 1), '-', rot('Z', 0), rot('Z', 1), '-',
  btn(`<path d="M13 6H7v20h6" stroke-dasharray="3 2" stroke-width="1.300"/><path d="M11 11q-6 5 0 10" stroke-width="1.200"/><path d="M12 5l13 3v17l-13 2z" fill="${B}" stroke="none"/><path d="M12 20l5 1" stroke-width="1.500"/>`), '-',
  arrow(0), arrow(180), arrow(90), arrow(270), '-',
  btn(`${cubeTop}<path d="M5.500 10L16 15v12L5.500 22z" fill="#a4a4a4" stroke-width="1.200"/><path d="M16 15l10.500-5v12L16 27.500z" fill="#b4b4b4" stroke-width="1.200"/><path d="M16 8v4M9 20l4-2M23 20l-4-2" stroke="#777" stroke-width="1"/>`), '-',
  btn(`<path d="M7 18l9 7 9-7v2.500l-9 7-9-7z" fill="#f29100" stroke="none"/><path d="M7 13l9 7 9-7v4l-9 7-9-7z" fill="#4d4d4d" stroke="none"/><path d="M16 5l9 7.500-9 7.500-9-7.500z" fill="${B}" stroke="none"/>`)
];
document.getElementById('vtools').innerHTML = vt.map(s => s === '-' ? '<div class="sep-v"></div>' : s).join('');

/* layers */
const layers = [['F.Cu', '#c83434'], ['B.Cu', '#4d7fc4'], ['F.Adhesive', '#840084'], ['B.Adhesive', '#000084'], ['F.Paste', '#a39088'], ['B.Paste', '#00b0ae'], ['F.Silkscreen', '#f2eda1'], ['B.Silkscreen', '#e8b2a7'], ['F.Mask', '#6e3c84', 1], ['B.Mask', '#0c8278', 1], ['User.Drawings', '#c2c2c2'], ['User.Comments', '#5994dc'], ['User.Eco1', '#b4dbd2'], ['User.Eco2', '#d8c852'], ['Edge.Cuts', '#d0d2cd'], ['Margin', '#ff26e2'], ['F.Courtyard', '#ff26e2'], ['B.Courtyard', '#26e9ff'], ['F.Fab', '#afafaf'], ['B.Fab', '#585d84'], ['User.1', '#c2c2c2'], ['User.2', '#5994dc']];
document.getElementById('layers').innerHTML = layers.map(([n, c, k], i) => `<div class="row${i ? '' : ' cur'}"><svg class="mark" viewBox="0 0 11 10">${i ? '' : '<path d="M0 0l5 5-5 5z" fill="#4040ff"/>'}</svg><span class="sw${k ? ' chk' : ''}" style="background-color:${c}"></span><svg class="eye" viewBox="0 0 16 16"><circle cx="8" cy="8" r="8" fill="#4f4f4f"/><path d="M1.800 8Q8 1.500 14.200 8 8 14.500 1.800 8z" fill="#f0f0f0"/><circle cx="8" cy="8" r="2" fill="none" stroke="#4f4f4f" stroke-width="1.100"/></svg>${n}</div>`).join('');

/* selection filter */
const names = ['All items', 'Locked items', 'Footprints', 'Text', 'Tracks', 'Vias', 'Pads', 'Graphics', 'Zones', 'Rule Areas', 'Dimensions', 'Other items'];
document.getElementById('checks').innerHTML = names.map((n, i) => `<span class="ck"><svg viewBox="0 0 13 13">${i === 1 ? '<rect x=".5" y=".5" width="12" height="12" rx="2" fill="#f8f8f8" stroke="#777"/>' : '<rect width="13" height="13" rx="2.500" fill="#005fb8"/><path d="M3.500 6.800l2.200 2.200 4-4.500" fill="none" stroke="#fff" stroke-width="1"/>'}</svg>${n}</span>`).join('');

/* grid ticks: one major intersection per tile */
let t = '<rect x="56" y="56" width="3" height="3" fill="#858a93"/>';
for (let i = -4; i <= 5; i++) if (i) {
  t += `<rect x="${57 + i * 11.43}" y="56" width="1" height="3" fill="#5c6572"/><rect x="56" y="${57 + i * 11.43}" width="3" height="1" fill="#6a727d"/>`;
}
document.getElementById('ticks').innerHTML = t;

/* module pads and pin labels */
const L = 'GP0 GP1 GND GP2 GP3 GP4 GP5 GND GP6 GP7 GP8 GP9 GND GP10 GP11 GP12 GP13 GND GP14 GP15'.split(' ');
const R = 'VBUS VSYS GND 3V3_EN 3V3 ADC_VREF GP28 AGND GP27 GP26 RUN GP22 GND GP21 GP20 GP19 GP18 GND GP17 GP16'.split(' ');
const label = (s, x, y) => `<text transform="translate(${x} ${y}) rotate(-45)" y="3.6" text-anchor="middle" textLength="${s.length * 5.95}" lengthAdjust="spacingAndGlyphs">${s}</text>`;
let pads = '', labels = '';
for (let i = 0; i < 20; i++) {
  const y = 228.2 + i * 20, k = i / 19;
  const shine = x => `<circle cx="${x}" cy="${y}" r="4.200" fill="#16140a"/><path d="M${x + 3.8} ${y - 2}a4.200 4.200 0 0 1 -4.500 6l1.500-4z" fill="url(#shade)" opacity="${1 - k * .7}"/>`;
  pads += `<rect x="387.700" y="${y - 6.8}" width="28" height="13.600" fill="#ffff40"/>${shine(409)}`;
  pads += `<rect x="541.700" y="${y - 6.8}" width="28" height="13.600" fill="#ffff40"/><circle cx="548.500" cy="${y}" r="4.200" fill="#16140a"/><circle cx="549.300" cy="${y + .7}" r="3.300" fill="#9a9ab4" opacity="${1 - k * .6}"/>`;
  if (i < 19) pads += `<path d="M396 ${y + 8.500}v3.500M561.700 ${y + 8.500}v3.500" stroke="#dfe5e1" stroke-width="1.200"/>`;
  const lw = L[i].length * 5.95, rw = R[i].length * 5.95;
  labels += label(L[i], 386 - (lw + 6) * .354, y);
  labels += label(R[i], 570.5 + (rw + 6) * .354, y - Math.max(0, R[i].length - 4) * 2.2);
}
for (const x of [451.7, 471.7, 491.7]) pads += `<rect x="${x}" y="599.300" width="13.600" height="28" fill="#ffff40"/><circle cx="${x + 6.8}" cy="606" r="4.200" fill="#14120a"/><path d="M${x + 6} 606.500l4-2q0 5-3.500 5z" fill="#6c6c80"/>`;
document.getElementById('pads').innerHTML = pads + `<g class="lbl">${labels}</g>`;
```
